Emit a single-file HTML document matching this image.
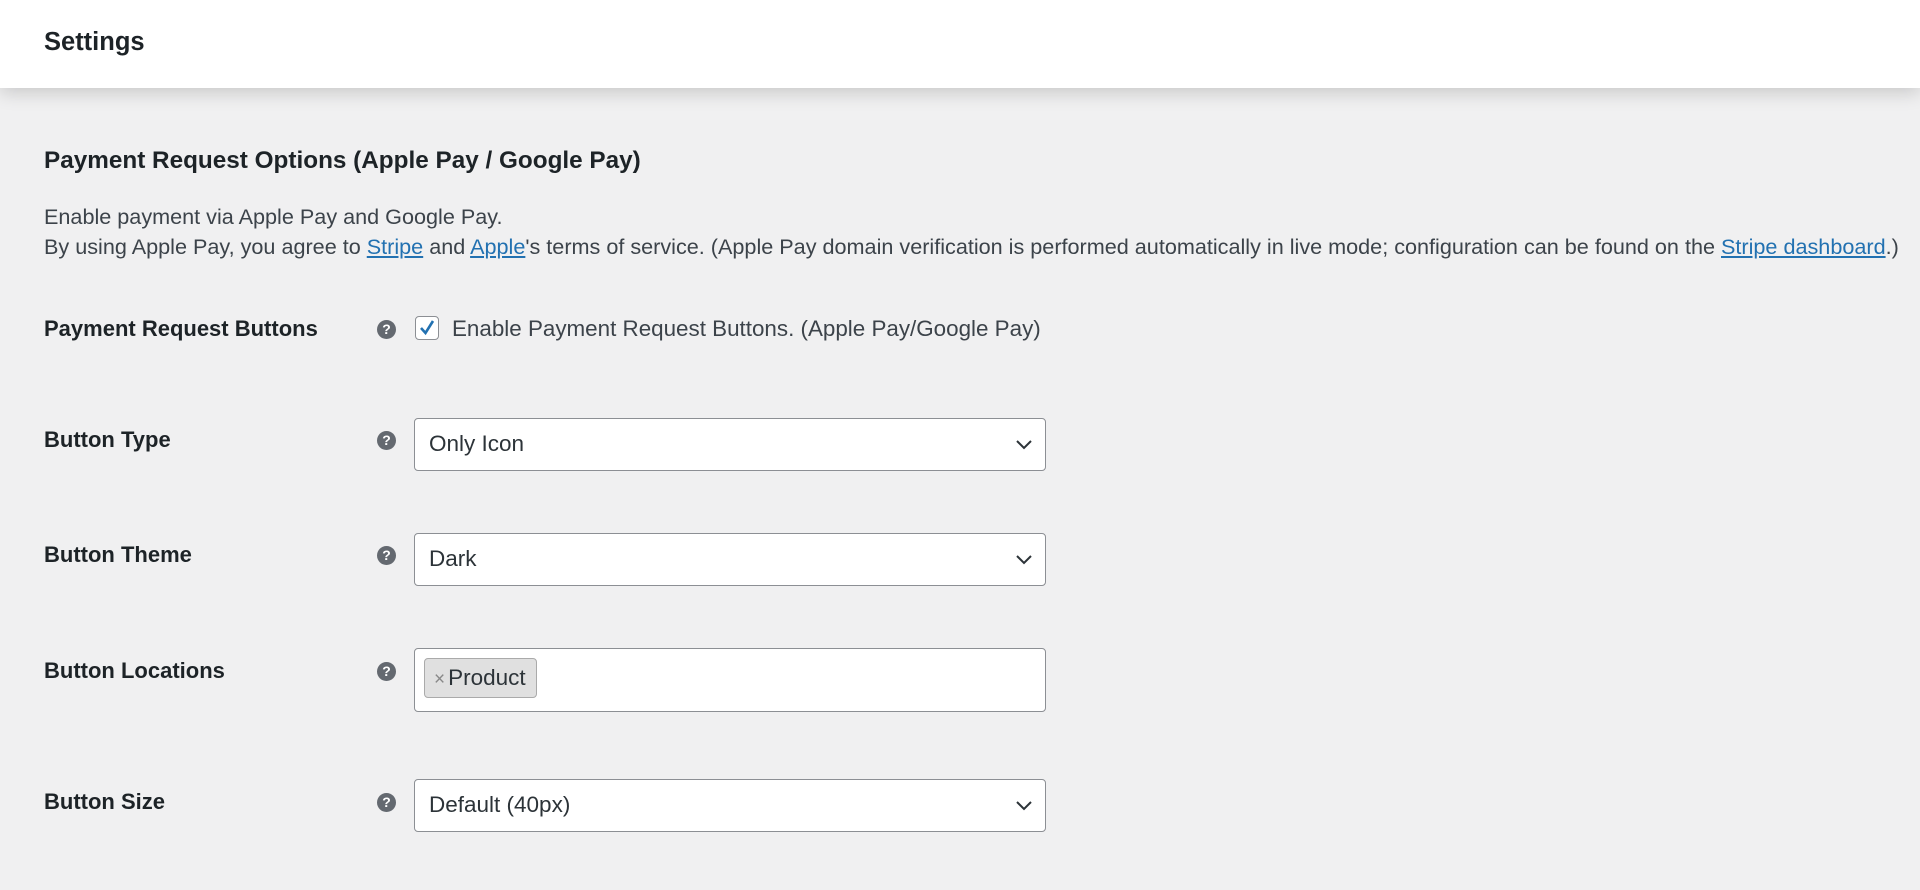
<!DOCTYPE html>
<html><head><meta charset="utf-8"><style>
*{box-sizing:border-box;margin:0;padding:0}
body{width:1920px;height:890px;overflow:hidden;background:#f0f0f1;font-family:"Liberation Sans",sans-serif;color:#3c434a;position:relative}
.hdr{position:absolute;left:0;top:0;width:1920px;height:88px;background:#fff;box-shadow:0 4px 18px rgba(0,0,0,.18)}
.hdr h1{position:absolute;left:44px;top:28px;font-size:25.5px;font-weight:bold;color:#1d2327}
.h2{position:absolute;left:44px;top:147px;font-size:24.3px;font-weight:bold;color:#1d2327}
.d{position:absolute;left:44px;font-size:21.62px;white-space:nowrap}
a{color:#2271b1;text-decoration:underline}
.lbl{position:absolute;left:44px;font-size:22px;font-weight:bold;color:#1d2327}
.help{position:absolute;left:377px;width:19px;height:19px;border-radius:50%;background:#646970;color:#fff;font-size:14px;font-weight:bold;text-align:center;line-height:19px}
.sel{position:absolute;left:414px;width:632px;background:#fff;border:1.5px solid #8c8f94;border-radius:4px;font-size:22.5px;color:#2c3338;padding-left:14px}
.sel svg{position:absolute;right:12px;top:50%;margin-top:-6px}
.cb{position:absolute;left:415px;top:316px;width:24px;height:24px;border:1.5px solid #8c8f94;border-radius:4px;background:#fff}
.tag{position:absolute;left:9px;top:9px;height:40px;padding:0 10px 0 9px;background:#e0e0e0;border:1.5px solid #aaa;border-radius:4px;line-height:37px;font-size:22.5px;color:#2c3338}
.tag span{color:#888;font-size:19px;margin-right:3px}
</style></head><body>
<div class="hdr"><h1>Settings</h1></div>
<div class="h2">Payment Request Options (Apple Pay / Google Pay)</div>
<div class="d" style="top:204px">Enable payment via Apple Pay and Google Pay.</div>
<div class="d" style="top:234px">By using Apple Pay, you agree to <a>Stripe</a> and <a>Apple</a>'s terms of service. (Apple Pay domain verification is performed automatically in live mode; configuration can be found on the <a>Stripe dashboard</a>.)</div>

<div class="lbl" style="top:316px">Payment Request Buttons</div>
<div class="help" style="top:320px">?</div>
<div class="cb"><svg width="22" height="22" viewBox="0 0 22 22" style="position:absolute;left:0;top:0"><path d="M5 11 L9.5 16 L17 4" fill="none" stroke="#2271b1" stroke-width="2.6"/></svg></div>
<div class="d" style="top:316px;left:452px;font-size:22.4px">Enable Payment Request Buttons. (Apple Pay/Google Pay)</div>

<div class="lbl" style="top:427px">Button Type</div>
<div class="help" style="top:431px">?</div>
<div class="sel" style="top:418px;height:53px;line-height:50px">Only Icon<svg width="18" height="12" viewBox="0 0 18 12"><path d="M2 2 L9 9 L16 2" fill="none" stroke="#2c3338" stroke-width="2"/></svg></div>

<div class="lbl" style="top:542px">Button Theme</div>
<div class="help" style="top:546px">?</div>
<div class="sel" style="top:533px;height:53px;line-height:50px">Dark<svg width="18" height="12" viewBox="0 0 18 12"><path d="M2 2 L9 9 L16 2" fill="none" stroke="#2c3338" stroke-width="2"/></svg></div>

<div class="lbl" style="top:658px">Button Locations</div>
<div class="help" style="top:662px">?</div>
<div class="sel" style="top:648px;height:64px;padding:0"><div class="tag"><span>×</span>Product</div></div>

<div class="lbl" style="top:789px">Button Size</div>
<div class="help" style="top:793px">?</div>
<div class="sel" style="top:779px;height:53px;line-height:50px">Default (40px)<svg width="18" height="12" viewBox="0 0 18 12"><path d="M2 2 L9 9 L16 2" fill="none" stroke="#2c3338" stroke-width="2"/></svg></div>
</body></html>
